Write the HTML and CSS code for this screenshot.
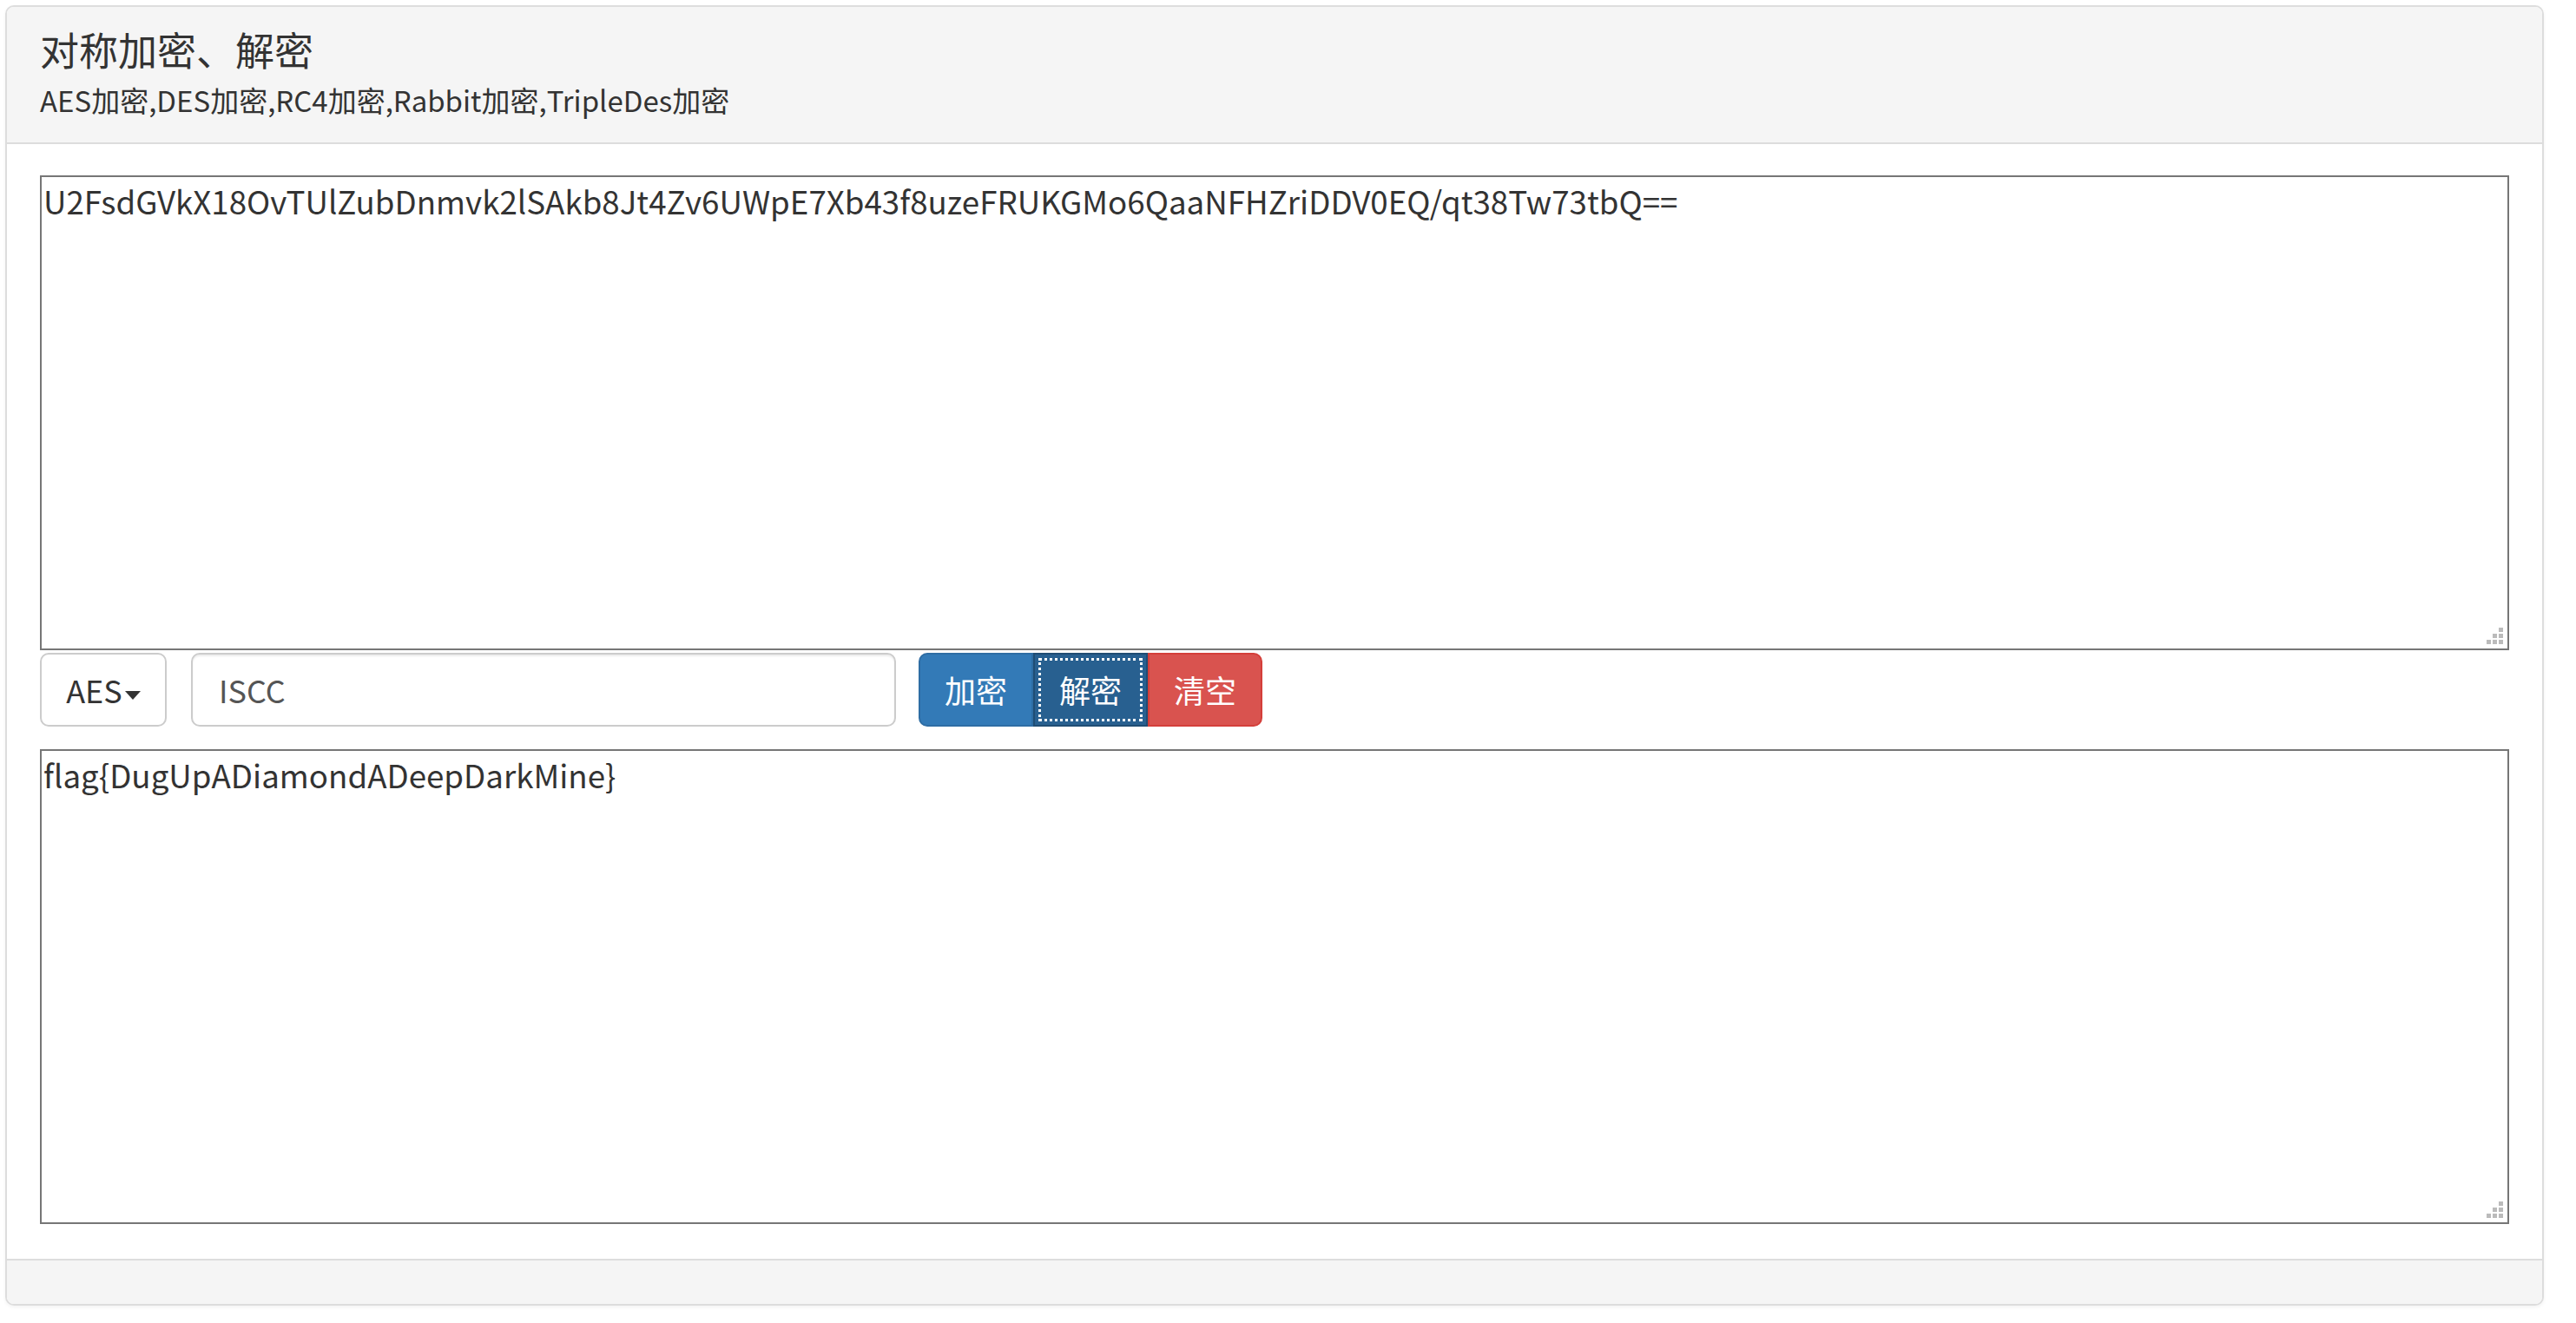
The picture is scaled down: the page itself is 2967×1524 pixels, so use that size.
FILE: index.html
```html
<!DOCTYPE html>
<html lang="zh-CN">
<head>
    <meta charset="UTF-8">
    <title>对称加密、解密</title>
    <link rel="stylesheet" href="styles.css">
</head>
<body>
    <div class="panel">
        <div class="panel-heading">
            <h3 class="panel-title">对称加密、解密</h3>
            <p class="panel-sub">AES加密,DES加密,RC4加密,Rabbit加密,TripleDes加密</p>
        </div>

        <div class="panel-body">
            <div class="text-wrap">
                <textarea class="text-box" id="source">U2FsdGVkX18OvTUlZubDnmvk2lSAkb8Jt4Zv6UWpE7Xb43f8uzeFRUKGMo6QaaNFHZriDDV0EQ/qt38Tw73tbQ==</textarea>
                <svg class="grip" width="20" height="20" viewBox="0 0 20 20">
                    <rect x="14" y="0" width="5" height="5"/>
                    <rect x="7" y="7" width="5" height="5"/>
                    <rect x="14" y="7" width="5" height="5"/>
                    <rect x="0" y="14" width="5" height="5"/>
                    <rect x="7" y="14" width="5" height="5"/>
                    <rect x="14" y="14" width="5" height="5"/>
                </svg>
            </div>

            <div class="tool-row">
                <button class="btn btn-default">AES<span class="caret"></span></button>
                <input type="text" class="key-input" value="ISCC">
                <div class="btn-group">
                    <button class="btn btn-primary">加密</button>
                    <button class="btn btn-primary active">解密</button>
                    <button class="btn btn-danger">清空</button>
                </div>
            </div>

            <div class="text-wrap">
                <textarea class="text-box" id="result">flag{DugUpADiamondADeepDarkMine}</textarea>
                <svg class="grip" width="20" height="20" viewBox="0 0 20 20">
                    <rect x="14" y="0" width="5" height="5"/>
                    <rect x="7" y="7" width="5" height="5"/>
                    <rect x="14" y="7" width="5" height="5"/>
                    <rect x="0" y="14" width="5" height="5"/>
                    <rect x="7" y="14" width="5" height="5"/>
                    <rect x="14" y="14" width="5" height="5"/>
                </svg>
            </div>
        </div>

        <div class="panel-footer"></div>
    </div>
</body>
</html>
```

FILE: styles.css
```css
body {
    margin: 0;
    padding: 6px 37px 19px 6px;
    background: #fff;
    font-family: "Noto Sans CJK SC", "Noto Sans", sans-serif;
    color: #333;
}

.panel {
    border: 2px solid #ddd;
    border-radius: 10px;
    background: #fff;
    box-shadow: 0 2px 4px rgba(0, 0, 0, 0.05);
    overflow: hidden;
}

.panel-heading {
    background: #f5f5f5;
    border-bottom: 2px solid #ddd;
    padding: 22px 38px 27px;
}

.panel-title {
    margin: 0;
    font-size: 45px;
    font-weight: 400;
    line-height: 1.2;
}

.panel-sub {
    margin: 10px 0 0;
    font-size: 33px;
    line-height: 1.3;
}

.panel-body {
    padding: 36px 38px 40px;
}

.text-wrap {
    position: relative;
}

.text-box {
    display: block;
    width: 100%;
    height: 547px;
    box-sizing: border-box;
    border: 2px solid #767676;
    padding: 4px 2px;
    font-family: inherit;
    font-size: 36.7px;
    line-height: 1.3;
    color: #333;
    resize: none;
}

.grip {
    position: absolute;
    right: 6px;
    bottom: 6px;
    fill: #bbb;
}

.tool-row {
    display: flex;
    align-items: center;
    margin: 3px 0 26px;
}

.btn {
    height: 85px;
    padding: 0 30px;
    font-family: inherit;
    font-size: 36px;
    border: 2px solid transparent;
    border-radius: 10px;
    cursor: pointer;
}

.btn-default {
    width: 146px;
    padding: 0;
    background: #fff;
    border-color: #ccc;
    color: #333;
}

.caret {
    display: inline-block;
    width: 0;
    height: 0;
    margin-left: 3px;
    vertical-align: middle;
    border-top: 10px solid #333;
    border-left: 9px solid transparent;
    border-right: 9px solid transparent;
}

.key-input {
    width: 812px;
    height: 85px;
    box-sizing: border-box;
    margin-left: 28px;
    padding: 0 30px;
    border: 2px solid #ccc;
    border-radius: 10px;
    font-family: inherit;
    font-size: 36px;
    color: #555;
    box-shadow: inset 0 2px 2px rgba(0, 0, 0, 0.075);
}

.btn-group {
    display: flex;
    margin-left: 26px;
}

.btn-group .btn {
    width: 132px;
    padding: 0;
    color: #fff;
}

.btn-group .btn:first-child {
    border-top-right-radius: 0;
    border-bottom-right-radius: 0;
}

.btn-group .btn:last-child {
    border-top-left-radius: 0;
    border-bottom-left-radius: 0;
}

.btn-group .btn:not(:first-child):not(:last-child) {
    border-radius: 0;
}

.btn-primary {
    background: #337ab7;
    border-color: #2e6da4;
}

.btn-primary.active {
    background: #286090;
    border-color: #204d74;
    outline: 3px dotted #fff;
    outline-offset: -9px;
}

.btn-danger {
    background: #d9534f;
    border-color: #d43f3a;
}

.panel-footer {
    height: 50px;
    background: #f5f5f5;
    border-top: 2px solid #ddd;
}
```
